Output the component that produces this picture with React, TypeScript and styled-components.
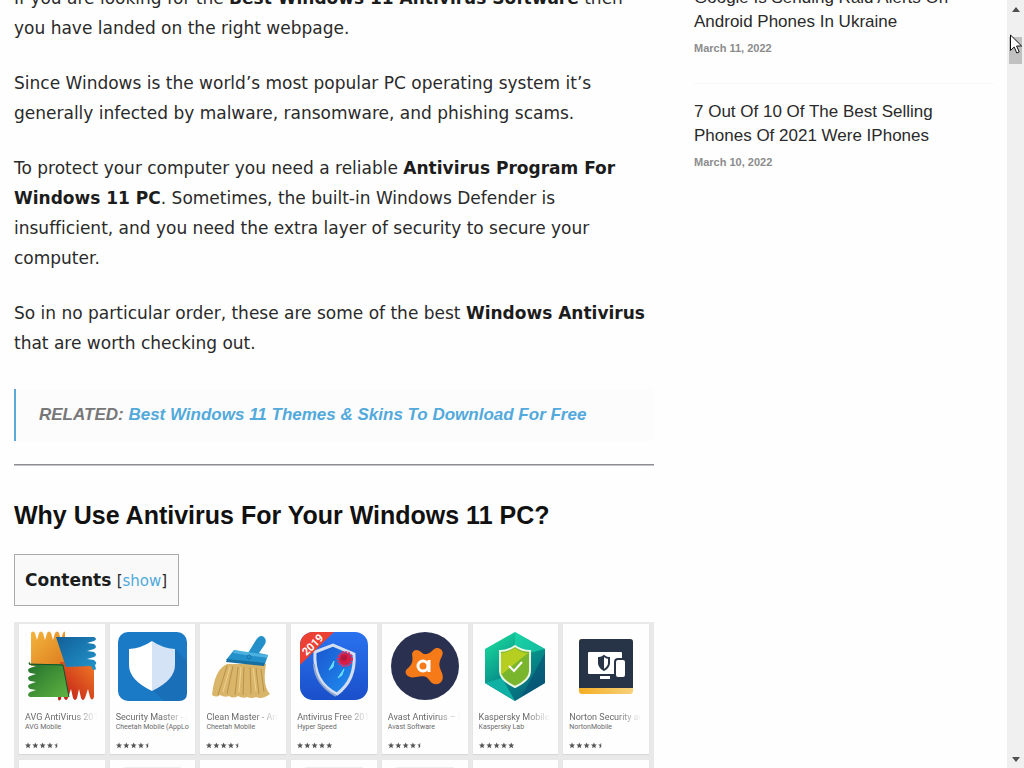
import React from "react";
import styled, { createGlobalStyle } from "styled-components";

const GlobalStyle = createGlobalStyle`
  *, *::before, *::after { box-sizing: border-box; }
  html, body { margin: 0; background: #fefefe; }
  body { overflow: hidden; }
`;

const sans = `"Liberation Sans", Arial, sans-serif`;
const wide = `Verdana, "DejaVu Sans", sans-serif`;

const Viewport = styled.div`
  display: flex;
  height: 100vh;
  overflow: hidden;
`;

const Page = styled.div`
  flex: 1;
  min-width: 0;
  display: grid;
  grid-template-columns: minmax(0, 32fr) minmax(0, 15fr);
  column-gap: 40px;
  align-items: start;
  padding: 0 13px 0 14px;
`;

const Article = styled.main`
  margin-top: -17px;
  color: #2a2a2a;
  font-family: ${wide};
  font-size: 17px;
  font-variant-ligatures: none;
  line-height: 30px;
`;

const Paragraph = styled.p`
  margin: 0 0 25px;
`;

const Strong = styled.strong`
  color: #1c1c1c;
`;

const Related = styled.blockquote`
  margin: 31px 0 23px;
  padding: 11px 23px;
  border-left: 2px solid #5aa9d6;
  background: #fcfcfc;
  color: #777;
  font: italic bold 17px/30px ${sans};
`;

const Link = styled.a`
  color: #52a9db;
  text-decoration: none;
`;

const Rule = styled.hr`
  margin: 0;
  border: 0;
  border-top: 1px solid #8f8d92;
  border-bottom: 1px solid #c4c2c6;
`;

const Heading = styled.h2`
  margin: 32px 0 22px;
  color: #111;
  font: bold 25px/34px ${sans};
`;

const Contents = styled.nav`
  width: fit-content;
  margin-bottom: 16px;
  padding: 10px 11px 10px 10px;
  border: 1px solid #aaa;
  background: #f9f9f9;
  white-space: nowrap;
`;

const ContentsLine = styled.p`
  margin: 0;
  height: 30px;
`;

const Toggle = styled.span`
  font-size: 15px;
`;

const Store = styled.section`
  display: grid;
  grid-template-columns: repeat(7, minmax(0, 1fr));
  gap: 6px 5px;
  padding: 2px 5px;
  background: #e9e9e9;
`;

const Card = styled.article`
  height: 130px;
  padding: 7px 6px 0;
  background: #fefefe;
  box-shadow: 0 1px 1px #d8d8d8;
  color: #6a6a6a;
  font-family: Roboto, sans-serif;
`;

const AppIcon = styled.svg`
  display: block;
  width: 70px;
  height: 70px;
  margin: 0 auto;
`;

const AppName = styled.h3`
  margin: 10px 0 0;
  overflow: hidden;
  white-space: nowrap;
  font-size: 9px;
  font-weight: 400;
  line-height: 12px;
  mask-image: linear-gradient(to right, #000 65%, transparent 98%);
`;

const Vendor = styled.p`
  margin: 0;
  overflow: hidden;
  white-space: nowrap;
  font-size: 7px;
  line-height: 8px;
`;

const Stars = styled.svg`
  display: block;
  width: 36px;
  height: 7px;
  margin-top: 11px;
`;

const Placeholder = styled.div`
  height: 2px;
  margin: 0 8px;
  border-radius: 2px;
  background: #eee;
`;

const Sidebar = styled.aside`
  margin-top: -30px;
  font-family: ${sans};
`;

const Post = styled.article`
  padding: 16px 0 28px;
  border-bottom: 1px solid #f8f8f8;

  &:last-child { border-bottom: 0; }
`;

const PostTitle = styled.h3`
  margin: 0 0 7px;
  max-width: 270px;
  font-size: 17px;
  font-weight: 400;
  line-height: 24px;
`;

const PostLink = styled.a`
  color: #2a2a2a;
  text-decoration: none;
`;

const PostDate = styled.time`
  display: block;
  color: #8c8c8c;
  font-size: 11px;
  font-weight: 700;
  line-height: 14px;
`;

const Scrollbar = styled.div`
  flex: 0 0 17px;
  display: flex;
  flex-direction: column;
  align-items: center;
  background: #f0f0f0;
`;

const ArrowButton = styled.button`
  display: flex;
  align-items: center;
  justify-content: center;
  width: 17px;
  height: 18px;
  padding: 0;
  border: 0;
  background: none;
`;

const Track = styled.div`
  flex: 1;
  padding-top: 19px;
`;

const Thumb = styled.div`
  width: 13px;
  height: 27px;
  background: #c1c1c1;
`;

const Cursor = styled.svg`
  position: absolute;
  top: 34px;
  right: 2px;
  width: 12px;
  height: 20px;
`;

const range = (n: number) => Array.from({ length: n }, (_, i) => i);

const AvgIcon = () => (
  <AppIcon viewBox="0 0 70 70" aria-hidden="true">
    <defs>
      <linearGradient id="avgO" x2="1" y2="1"><stop stopColor="#f3b53c" /><stop offset="1" stopColor="#dd7c1f" /></linearGradient>
      <linearGradient id="avgB" x2="1" y2="1"><stop stopColor="#125f98" /><stop offset="1" stopColor="#2295cb" /></linearGradient>
      <linearGradient id="avgG" x2="1" y2="1"><stop stopColor="#226f2c" /><stop offset="1" stopColor="#5fb441" /></linearGradient>
      <linearGradient id="avgR" x1="1" x2="0" y2="1"><stop stopColor="#f07a24" /><stop offset="1" stopColor="#bd1717" /></linearGradient>
    </defs>
    <path fill="url(#avgO)" d="M4 35V2q2-3 4 0l2 7 2-7q2-3 4 0l2 7 2-7q2-3 4 0l2 7 2-7q2-3 4 0l2 7 2-7q2-3 2 0v33z" />
    <path fill="url(#avgR)" d="M33 31h34v35q-2 5-4 0l-2-8-3 9q-2 4-4 0l-2-9-2 9q-2 4-4 0l-2-9-3 9q-2 4-4 0l-2-7-1 8q-2 3-3 0z" />
    <path fill="url(#avgB)" d="M29 6h38q4 2 0 4l-7 2 7 1q4 3 0 5l-7 2 7 1q4 3 0 5l-7 2 7 1q4 3 1 5l1 4q-3 3-5-3L39 36z" />
    <path fill="url(#avgG)" d="M3 33h33l6 33H3q-4-2 0-5l6-2-6-1q-4-3 0-5l6-2-6-1q-4-3 0-5l6-2-6-1q-4-3 0-5l6-2-6-1q-3-2 0-3z" />
    <path d="M2 33l34 1 6 32" fill="none" stroke="#174f2d" />
  </AppIcon>
);

const SecurityMasterIcon = () => (
  <AppIcon viewBox="0 0 70 70" aria-hidden="true">
    <rect x="0" y="1" width="69" height="69" rx="10" fill="#1b7ac5" />
    <path d="M57 18l12 12v32q0 8-8 8H46L34 59z" fill="#1a6fb9" />
    <path d="M34 10q-10 7-23 8v16q0 15 23 26z" fill="#fff" />
    <path d="M34 10q10 7 23 8v16q0 15-23 26z" fill="#d4e3f6" />
  </AppIcon>
);

const CleanMasterIcon = () => (
  <AppIcon viewBox="0 0 70 70" aria-hidden="true">
    <path d="M19 33C9 38 6 48 4 64q5 3 8 0 5 3 9 1 4 3 9 0 5 3 9 1 5 2 9 0 6 3 14-3-8-8-4-30z" fill="#d9b56a" />
    <path d="M19 35L10 64M25 35l-6 28M30 36l-3 28M36 36l-1 28M42 36l1 27M48 37l3 26M53 38l3 23" stroke="#b8924b" fill="none" />
    <path d="M22 36l-7 25M33 36l-2 25M45 37l3 23" stroke="#f0d38f" fill="none" />
    <path d="M26 19l14 3 8-13q4-6 8-3 3 3 1 7l-6 9 9 2-3 9-39-4z" fill="#2490c9" />
    <path d="M26 19l34 5-1 3-34-5z" fill="#4cb1df" />
    <path d="M19 28l38 4-1 3-38-4z" fill="#176f9f" />
    <circle cx="41" cy="26" r="2" fill="none" stroke="#1873a6" />
  </AppIcon>
);

const AntivirusFreeIcon = () => (
  <AppIcon viewBox="0 0 70 70" aria-hidden="true">
    <defs>
      <clipPath id="afClip"><rect x="1" y="1" width="68" height="68" rx="13" /></clipPath>
      <linearGradient id="afBg" x2="0" y2="1"><stop stopColor="#2a72ef" /><stop offset="1" stopColor="#1a4fc9" /></linearGradient>
      <linearGradient id="afShield" x2="1" y2="1"><stop stopColor="#1a55cf" /><stop offset="1" stopColor="#1f90f0" /></linearGradient>
    </defs>
    <g clipPath="url(#afClip)">
      <rect width="70" height="70" fill="url(#afBg)" />
      <path d="M16 21l18-7 21 9q2 26-17 40Q14 52 16 21z" fill="url(#afShield)" stroke="#d3def2" strokeWidth="3" />
      <path d="M37 65Q16 53 15 33" fill="none" stroke="#8fa6cf" strokeWidth="2" />
      <path d="M39 47l6-9-2 6zM30 39l5-9-1 6z" fill="#65e1fb" stroke="#65e1fb" />
      <circle cx="46" cy="28" r="7" fill="none" stroke="#e62c62" strokeWidth="2" strokeDasharray="2 1" />
      <circle cx="46" cy="28" r="6" fill="#db1c43" />
      <circle cx="45" cy="27" r="3" fill="#b0183f" />
      <path d="M0 0h36L0 35z" fill="#ec4032" />
      <text x="15" y="17" transform="rotate(-45 15 15)" textAnchor="middle" fill="#fff" fontFamily="Roboto, sans-serif" fontWeight="700" fontSize="11">2019</text>
    </g>
  </AppIcon>
);

const AvastIcon = () => (
  <AppIcon viewBox="0 0 70 70" aria-hidden="true">
    <circle cx="35" cy="35" r="34" fill="#2a3050" />
    <path d="M22 23c1-5 6-5 9-2 4 4 8 2 12-2 5-5 12 0 9 6-4 8-3 10 0 17 4 10-7 15-12 8-4-6-7-5-14-4-8 2-13-4-9-8 6-5 6-9 5-15z" fill="#f77a18" />
    <circle cx="33" cy="35" r="5" fill="none" stroke="#fff" strokeWidth="3" />
    <path d="M39 29v12" stroke="#fff" strokeWidth="3" />
  </AppIcon>
);

const KasperskyIcon = () => (
  <AppIcon viewBox="0 0 70 70" aria-hidden="true">
    <defs><linearGradient id="kasBg" x1=".2" y1=".1" x2=".8" y2="1"><stop stopColor="#17cf99" /><stop offset=".5" stopColor="#068d89" /><stop offset="1" stopColor="#075b78" /></linearGradient></defs>
    <path d="M35 1l30 17v34L35 70 5 52V18z" fill="url(#kasBg)" />
    <path d="M35 1l30 17-16 4-14-8z" fill="#20ddb0" opacity=".6" />
    <path d="M5 52l17-5 13 23z" fill="#10b0a4" />
    <path d="M65 22v30L41 66z" fill="#064e73" opacity=".6" />
    <path d="M35 15q7 5 15 5v20q0 9-15 16-15-7-15-16V20q8 0 15-5z" fill="#79b52d" stroke="#edf7e6" strokeWidth="2" />
    <path d="M35 17q6 5 13 5L21 44V22q8-1 14-5z" fill="#b5ce20" />
    <path d="M29 35l5 5 8-9" fill="none" stroke="#fff" strokeWidth="2" />
  </AppIcon>
);

const NortonIcon = () => (
  <AppIcon viewBox="0 0 70 70" aria-hidden="true">
    <defs><linearGradient id="norY"><stop stopColor="#f5ae24" /><stop offset="1" stopColor="#f7d17a" /></linearGradient></defs>
    <rect x="8" y="8" width="54" height="55" rx="3" fill="url(#norY)" />
    <path d="M8 57V11q0-3 3-3h48q3 0 3 3v46z" fill="#273346" />
    <rect x="17" y="21" width="34" height="22" rx="1" fill="#fff" />
    <rect x="29" y="45" width="10" height="3" fill="#fff" />
    <rect x="44" y="28" width="11" height="19" rx="3" fill="#fff" stroke="#273346" strokeWidth="2" />
    <path d="M33 25q3 2 5 2v5q0 4-5 7-5-3-5-7v-5q3 0 5-2z" fill="#fff" stroke="#273346" strokeWidth="2" />
    <path d="M33 25q-3 2-5 2v5q0 4 5 7z" fill="#273346" />
  </AppIcon>
);

const StarRating = ({ half }: { half: boolean }) => (
  <Stars viewBox="0 0 36 7" role="img" aria-label="Rated 4.5 out of 5">
    {range(5).map((i) => (
      <path
        key={i}
        transform={`translate(${i * 7.3} 0)`}
        fill="#555"
        d={i === 4 && half
          ? "M3 .5v4.6L1.200 6.200l.5-2.200L0 2.600l2.200-.2z"
          : "M3 .5l.9 1.900 2.100.2-1.600 1.400.5 2.200L3 5.100 1.200 6.200l.5-2.200L0 2.600l2.200-.2z"}
      />
    ))}
  </Stars>
);

const apps = [
  { name: "AVG AntiVirus 2019", vendor: "AVG Mobile", Icon: AvgIcon, half: true },
  { name: "Security Master - Antivirus", vendor: "Cheetah Mobile (AppLock", Icon: SecurityMasterIcon, half: true },
  { name: "Clean Master - Antivirus", vendor: "Cheetah Mobile", Icon: CleanMasterIcon, half: true },
  { name: "Antivirus Free 2019", vendor: "Hyper Speed", Icon: AntivirusFreeIcon, half: false },
  { name: "Avast Antivirus – Mobile", vendor: "Avast Software", Icon: AvastIcon, half: true },
  { name: "Kaspersky Mobile Antivirus", vendor: "Kaspersky Lab", Icon: KasperskyIcon, half: false },
  { name: "Norton Security and", vendor: "NortonMobile", Icon: NortonIcon, half: true },
];

const posts = [
  { title: "Google Is Sending Raid Alerts On Android Phones In Ukraine", date: "March 11, 2022", iso: "2022-03-11" },
  { title: "7 Out Of 10 Of The Best Selling Phones Of 2021 Were IPhones", date: "March 10, 2022", iso: "2022-03-10" },
];

export default function App() {
  return (
    <>
      <GlobalStyle />
      <Viewport>
        <Page>
          <Article>
            <Paragraph>
              If you are looking for the <Strong>Best Windows 11 Antivirus Software</Strong> then you have landed on the right webpage.
            </Paragraph>
            <Paragraph>
              Since Windows is the world’s most popular PC operating system it’s generally infected by malware, ransomware, and phishing scams.
            </Paragraph>
            <Paragraph>
              To protect your computer you need a reliable <Strong>Antivirus Program For Windows 11 PC</Strong>. Sometimes, the built-in Windows Defender is insufficient, and you need the extra layer of security to secure your computer.
            </Paragraph>
            <Paragraph>
              So in no particular order, these are some of the best <Strong>Windows Antivirus</Strong> that are worth checking out.
            </Paragraph>
            <Related>
              RELATED: <Link href="#themes">Best Windows 11 Themes &amp; Skins To Download For Free</Link>
            </Related>
            <Rule />
            <Heading>Why Use Antivirus For Your Windows 11 PC?</Heading>
            <Contents>
              <ContentsLine>
                <Strong>Contents</Strong> <Toggle>[<Link href="#contents">show</Link>]</Toggle>
              </ContentsLine>
            </Contents>
            <Store>
              {apps.map(({ name, vendor, Icon, half }) => (
                <Card key={name}>
                  <Icon />
                  <AppName>{name}</AppName>
                  <Vendor>{vendor}</Vendor>
                  <StarRating half={half} />
                </Card>
              ))}
              {apps.map(({ name }, i) => (
                <Card key={name}>{i % 2 === 1 && i < 4 || i === 4 ? <Placeholder /> : null}</Card>
              ))}
            </Store>
          </Article>
          <Sidebar>
            {posts.map((post) => (
              <Post key={post.iso}>
                <PostTitle><PostLink href={`#${post.iso}`}>{post.title}</PostLink></PostTitle>
                <PostDate dateTime={post.iso}>{post.date}</PostDate>
              </Post>
            ))}
          </Sidebar>
        </Page>
        <Scrollbar>
          <ArrowButton aria-label="Scroll up">
            <svg width="8" height="5" viewBox="0 0 8 5"><path d="M4 0l4 5H0z" fill="#505050" /></svg>
          </ArrowButton>
          <Track><Thumb /></Track>
          <ArrowButton aria-label="Scroll down">
            <svg width="8" height="5" viewBox="0 0 8 5"><path d="M4 5l4-5H0z" fill="#505050" /></svg>
          </ArrowButton>
        </Scrollbar>
        <Cursor viewBox="0 0 12 20" aria-hidden="true">
          <path d="M.5 1v15.500l3.700-3.500 2.600 6 2.400-1-2.600-6h5z" fill="#fff" stroke="#111" />
        </Cursor>
      </Viewport>
    </>
  );
}
